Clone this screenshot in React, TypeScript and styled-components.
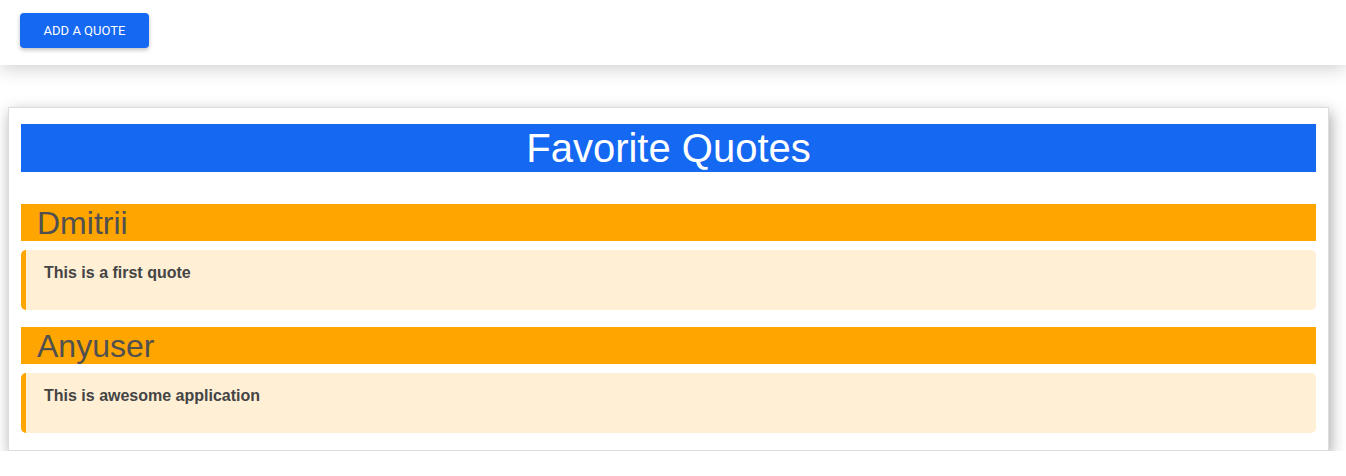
import { createGlobalStyle, styled } from 'styled-components';

const GlobalStyle = createGlobalStyle`
  body {
    margin: 0;
    background: #fff;
    font-family: 'Liberation Sans', Arial, sans-serif;
  }
`;

const Header = styled.header`
  height: 65px;
  box-sizing: border-box;
  display: flex;
  align-items: flex-start;
  padding: 13px 20px 0;
  background: #fff;
  box-shadow: 0 3px 18px rgba(0, 0, 0, 0.2);
  position: relative;
  z-index: 1;
`;

const AddButton = styled.button`
  height: 35px;
  width: 129px;
  padding: 0;
  border: none;
  border-radius: 4px;
  background: #1468f2;
  color: #fff;
  font-family: Roboto, 'Liberation Sans', sans-serif;
  font-size: 13px;
  font-weight: 400;
  text-transform: uppercase;
  box-shadow: 0 2px 4px rgba(0, 0, 0, 0.25);
  cursor: pointer;
`;

const Card = styled.section`
  width: 1321px;
  box-sizing: border-box;
  margin: 42px 0 0 8px;
  padding: 16px 12px 17px;
  border: 1px solid #ddd;
  background: #fff;
  box-shadow: 2px 5px 14px rgba(0, 0, 0, 0.35);
`;

const Title = styled.h1`
  margin: 0 0 32px;
  height: 48px;
  line-height: 48px;
  background: #1468f2;
  color: #fff;
  text-align: center;
  font-size: 40px;
  font-weight: 400;
`;

const QuoteBlock = styled.div`
  & + & {
    margin-top: 17px;
  }
`;

const Author = styled.h2`
  margin: 0 0 9px;
  height: 37px;
  line-height: 38px;
  padding-left: 16px;
  background: #ffa500;
  color: #505050;
  font-size: 32px;
  font-weight: 400;
`;

const QuoteText = styled.blockquote`
  margin: 0;
  height: 60px;
  box-sizing: border-box;
  padding: 14px 18px 0;
  border-left: 5px solid #ffa500;
  border-radius: 5px;
  background: #ffefd5;
  color: #444;
  font-size: 16px;
  font-weight: 700;
`;

const quotes = [
  { author: 'Dmitrii', text: 'This is a first quote' },
  { author: 'Anyuser', text: 'This is awesome application' },
];

export default function App() {
  return (
    <>
      <GlobalStyle />
      <Header>
        <AddButton>Add a quote</AddButton>
      </Header>
      <Card>
        <Title>Favorite Quotes</Title>
        {quotes.map((q) => (
          <QuoteBlock key={q.author}>
            <Author>{q.author}</Author>
            <QuoteText>{q.text}</QuoteText>
          </QuoteBlock>
        ))}
      </Card>
    </>
  );
}
